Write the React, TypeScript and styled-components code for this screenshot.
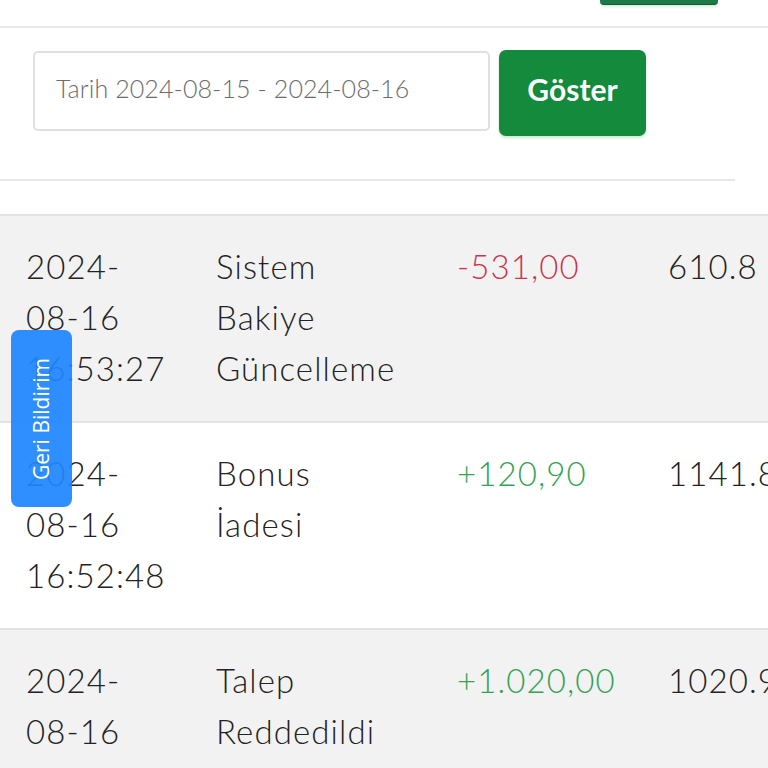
import React from "react";
import styled, { createGlobalStyle } from "styled-components";

const GlobalStyle = createGlobalStyle`
  html, body {
    margin: 0;
    padding: 0;
    background: #fff;
    overflow: hidden;
  }
  body {
    font-family: Lato, "Noto Sans", sans-serif;
    color: #222;
  }
`;

const Page = styled.div`
  position: relative;
  width: 768px;
  height: 768px;
  overflow: hidden;
`;

const TopBar = styled.div`
  display: flex;
  justify-content: flex-end;
  align-items: flex-start;
  height: 26px;
  border-bottom: 2px solid #e9e9e9;
  padding-right: 50px;
`;

const HeaderButton = styled.div`
  width: 118px;
  height: 4px;
  background: #1d7a48;
  border-bottom: 1px solid #145c35;
  border-radius: 0 0 4px 4px;
  box-shadow: 0 2px 3px rgba(40, 167, 69, 0.2);
`;

const FilterSection = styled.div`
  width: 735px;
  padding: 22px 0 43px 33px;
  box-sizing: border-box;
  border-bottom: 2px solid #e8e8e8;
`;

const FilterRow = styled.form`
  display: flex;
  align-items: flex-start;
  gap: 9px;
  margin: 0;
`;

const DateInput = styled.input`
  width: 457px;
  height: 80px;
  margin-top: 1px;
  box-sizing: border-box;
  border: 2px solid #e0e0e0;
  border-radius: 5px;
  padding: 0 0 6px 21px;
  font-family: Lato, "Noto Sans", sans-serif;
  font-weight: 300;
  font-size: 25px;
  letter-spacing: 0.1px;
  color: #6c6c6c;
  background: #fff;
  outline: none;

  &::placeholder {
    color: #6c6c6c;
  }
`;

const ShowButton = styled.button`
  width: 147px;
  height: 86px;
  border: none;
  border-radius: 7px;
  background: #138a3c;
  color: #fff;
  font-family: Lato, "Noto Sans", sans-serif;
  font-weight: 700;
  font-size: 30px;
  padding: 0 0 8px;
  box-shadow: 0 2px 3px rgba(40, 167, 69, 0.25);
  cursor: pointer;
`;

const Table = styled.div`
  margin-top: 33px;
  border-top: 2px solid #e2e2e2;
`;

const Row = styled.div<{ $striped: boolean }>`
  display: grid;
  grid-template-columns: 190px 241px 211px auto;
  padding: 25px 0 27px 26px;
  background: ${(p) => (p.$striped ? "#f2f2f2" : "#ffffff")};
  border-bottom: 2px solid #e3e3e3;
  font-size: 33px;
  font-weight: 300;
  letter-spacing: 1.1px;
  line-height: 51px;
`;

const Cell = styled.div`
  width: min-content;
`;

const Amount = styled.div<{ $negative: boolean }>`
  white-space: nowrap;
  color: ${(p) => (p.$negative ? "#c8374f" : "#34a352")};
`;

const Balance = styled.div`
  white-space: nowrap;
`;

const FeedbackTab = styled.button`
  position: absolute;
  left: 11px;
  top: 330px;
  width: 61px;
  height: 177px;
  border: none;
  border-radius: 8px;
  background: rgba(30, 134, 255, 0.92);
  display: flex;
  align-items: center;
  justify-content: center;
  padding: 0;
  cursor: pointer;
`;

const FeedbackLabel = styled.span`
  transform: rotate(-90deg);
  white-space: nowrap;
  color: #fff;
  font-family: "Open Sans", "Noto Sans", sans-serif;
  font-size: 21px;
`;

const rows = [
  { date: "2024-08-16 16:53:27", desc: "Sistem Bakiye Güncelleme", amount: "-531,00", balance: "610.8" },
  { date: "2024-08-16 16:52:48", desc: "Bonus İadesi", amount: "+120,90", balance: "1141.8" },
  { date: "2024-08-16 16:52:11", desc: "Talep Reddedildi", amount: "+1.020,00", balance: "1020.9" },
];

export default function App() {
  return (
    <Page>
      <GlobalStyle />
      <TopBar>
        <HeaderButton />
      </TopBar>
      <FilterSection>
        <FilterRow onSubmit={(e) => e.preventDefault()}>
          <DateInput placeholder="Tarih 2024-08-15 - 2024-08-16" />
          <ShowButton type="submit">Göster</ShowButton>
        </FilterRow>
      </FilterSection>
      <Table>
        {rows.map((r, i) => (
          <Row key={i} $striped={i % 2 === 0}>
            <Cell>{r.date}</Cell>
            <Cell>{r.desc}</Cell>
            <Amount $negative={r.amount.startsWith("-")}>{r.amount}</Amount>
            <Balance>{r.balance}</Balance>
          </Row>
        ))}
      </Table>
      <FeedbackTab>
        <FeedbackLabel>Geri Bildirim</FeedbackLabel>
      </FeedbackTab>
    </Page>
  );
}
